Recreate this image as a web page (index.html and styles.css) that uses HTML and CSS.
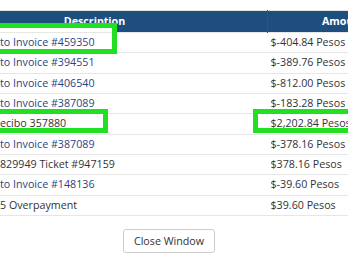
FILE: index.html
```html
<!DOCTYPE html>
<html>
<head>
<meta charset="utf-8">
<link rel="stylesheet" href="styles.css">
</head>
<body>
<div class="page">
  <table class="grid">
    <thead>
      <tr><th class="c-desc">Description</th><th class="c-amt">Amount</th></tr>
    </thead>
    <tbody>
      <tr><td class="c-desc"><a class="lnk">to Invoice #459350</a></td><td class="c-amt">$-404.84 Pesos</td></tr>
      <tr><td class="c-desc"><a class="lnk">to Invoice #394551</a></td><td class="c-amt">$-389.76 Pesos</td></tr>
      <tr><td class="c-desc"><a class="lnk">to Invoice #406540</a></td><td class="c-amt">$-812.00 Pesos</td></tr>
      <tr><td class="c-desc"><a class="lnk">to Invoice #387089</a></td><td class="c-amt">$-183.28 Pesos</td></tr>
      <tr><td class="c-desc">ecibo 357880</td><td class="c-amt">$2,202.84 Pesos</td></tr>
      <tr><td class="c-desc"><a class="lnk">to Invoice #387089</a></td><td class="c-amt">$-378.16 Pesos</td></tr>
      <tr><td class="c-desc">829949 Ticket #947159</td><td class="c-amt">$378.16 Pesos</td></tr>
      <tr><td class="c-desc"><a class="lnk">to Invoice #148136</a></td><td class="c-amt">$-39.60 Pesos</td></tr>
      <tr><td class="c-desc">5 Overpayment</td><td class="c-amt">$39.60 Pesos</td></tr>
    </tbody>
  </table>
  <div class="actions">
    <button class="btn">Close Window</button>
  </div>
</div>
<div class="mark mark-1"></div>
<div class="mark mark-2"></div>
<div class="mark mark-3"></div>
</body>
</html>
```

FILE: styles.css
```css
html, body {
  margin: 0;
  padding: 0;
  background: #fff;
}
html { overflow: hidden; }
body {
  width: 348px;
  height: 268px;
  overflow: hidden;
  position: relative;
  font-family: "Open Sans", "Liberation Sans", sans-serif;
  font-size: 10.7px;
  color: #333;
}
.page {
  padding-top: 10px;
  margin-left: -78px;
  width: 496px;
}
.grid {
  width: 496px;
  border-collapse: collapse;
  border-top: 1px solid #e2e2e2;
  table-layout: fixed;
}
.grid th {
  background: #1d4e7e;
  color: #fff;
  font-weight: 700;
  height: 21px;
  padding: 0;
  line-height: 21px;
  text-align: center;
}
.grid th.c-desc { width: 345px; }
.grid th.c-amt { width: 151px; border-left: 1px solid #2a5886; }
.grid td {
  border-top: 1px solid #e6e6e6;
  line-height: 19.33px;
  padding: 0 3px;
  white-space: nowrap;
}
.grid td.c-desc { padding-left: 78px; }
.grid tbody tr:last-child td { border-bottom: 1px solid #e6e6e6; }
.lnk { color: #2b4383; text-decoration: none; }
.actions {
  display: flex;
  justify-content: center;
  padding-top: 13px;
  padding-left: 78px;
  width: 338px;
}
.btn {
  font-family: "Open Sans", "Liberation Sans", sans-serif;
  font-size: 10.7px;
  color: #333;
  line-height: 16px;
  padding: 3px 10px;
  background: #fff;
  border: 1px solid #ccc;
  border-radius: 3px;
}
.mark {
  position: absolute;
  border: 5px solid #21e021;
  box-sizing: border-box;
}
.mark-1 {
  left: -10px; top: 23px; width: 127px; height: 31px;
  background: linear-gradient(#fff, #fff) no-repeat;
  background-size: 100% 4px;
}
.mark-2 { left: -10px; top: 109px; width: 118px; height: 24px; }
.mark-3 { left: 253px; top: 109px; width: 140px; height: 24px; }
```
